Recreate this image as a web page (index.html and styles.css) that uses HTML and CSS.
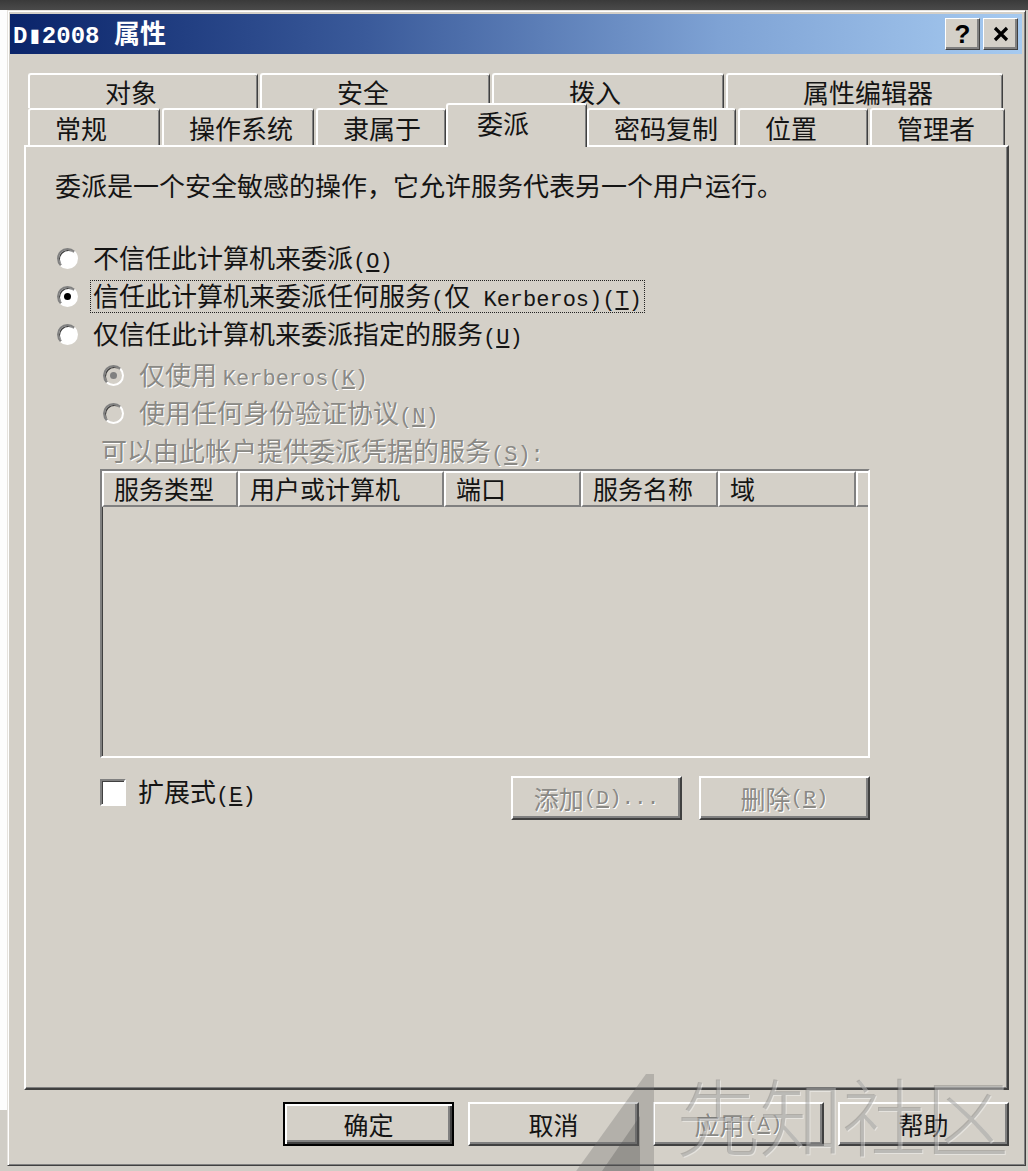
FILE: index.html
```html
<!DOCTYPE html>
<html lang="zh-CN">
<head>
<meta charset="utf-8">
<title>DM2008 属性</title>
<link rel="stylesheet" href="styles.css">
</head>
<body>
<div class="screen">
  <div class="topband"></div>
  <div class="main">
    <div class="leftstrip"></div>
    <div class="window">
      <div class="titlebar">
        <div class="title"><span class="tm">D▮2008 </span>属性</div>
        <div class="tbtns">
          <div class="tbtn q">?</div>
          <div class="tbtn">
            <svg width="16" height="16" viewBox="0 0 16 16"><path d="M2 2 L14 14 M14 2 L2 14" stroke="#000" stroke-width="3.2"/></svg>
          </div>
        </div>
      </div>
      <div class="body">
        <div class="tabs">
          <div class="tabrow r1">
            <div class="tab a1">对象</div>
            <div class="tab a2">安全</div>
            <div class="tab a3">拨入</div>
            <div class="tab a4">属性编辑器</div>
          </div>
          <div class="tabrow r2">
            <div class="tab b1">常规</div>
            <div class="tab b2">操作系统</div>
            <div class="tab b3">隶属于</div>
            <div class="tab b4 sel">委派</div>
            <div class="tab b5">密码复制</div>
            <div class="tab b6">位置</div>
            <div class="tab b7">管理者</div>
          </div>
        </div>
        <div class="panel">
          <div class="intro">委派是一个安全敏感的操作，它允许服务代表另一个用户运行。</div>
          <div class="opt"><span class="radio"></span><span class="lbl">不信任此计算机来委派<span class="m">(<u>O</u>)</span></span></div>
          <div class="opt"><span class="radio on"></span><span class="lbl focus">信任此计算机来委派任何服务<span class="m">(</span>仅<span class="m"> Kerberos)(<u>T</u>)</span></span></div>
          <div class="opt"><span class="radio"></span><span class="lbl">仅信任此计算机来委派指定的服务<span class="m">(<u>U</u>)</span></span></div>
          <div class="sub">
            <div class="opt dis"><span class="radio on"></span><span class="lbl">仅使用 <span class="m">Kerberos(<u>K</u>)</span></span></div>
            <div class="opt dis"><span class="radio"></span><span class="lbl">使用任何身份验证协议<span class="m">(<u>N</u>)</span></span></div>
          </div>
          <div class="svclabel dis">可以由此帐户提供委派凭据的服务<span class="m">(<u>S</u>):</span></div>
          <div class="list">
            <div class="lhead">
              <div class="hc c1">服务类型</div>
              <div class="hc c2">用户或计算机</div>
              <div class="hc c3">端口</div>
              <div class="hc c4">服务名称</div>
              <div class="hc c5">域</div>
              <div class="hc fill"></div>
            </div>
          </div>
          <div class="checkrow">
            <div class="chk"><span class="box"></span><span class="lbl">扩展式<span class="m">(<u>E</u>)</span></span></div>
            <div class="lbtns">
              <div class="btn dis">添加<span class="m">(<u>D</u>)...</span></div>
              <div class="btn dis">删除<span class="m">(<u>R</u>)</span></div>
            </div>
          </div>
        </div>
        <div class="btnrow">
          <div class="btn def">确定</div>
          <div class="btn">取消</div>
          <div class="btn dis">应用<span class="m">(<u>A</u>)</span></div>
          <div class="btn">帮助</div>
        </div>
      </div>
    </div>
  </div>
  <div class="watermark">
    <svg class="logo" width="90" height="110" viewBox="0 0 90 110">
      <polygon points="4,106 76,6 84,6 84,106" fill="rgba(110,110,110,0.32)"/>
      <polygon points="30,106 70,48 70,106" fill="rgba(80,80,80,0.30)"/>
    </svg>
    <span class="wmtext">先知社区</span>
  </div>
</div>
</body>
</html>
```

FILE: styles.css
```css
html, body {
  margin: 0;
  padding: 0;
}
body {
  background: #d0cdc6;
  width: 1028px;
  height: 1171px;
  overflow: hidden;
  font-family: "Noto Sans CJK SC", sans-serif;
  font-size: 26px;
  color: #141414;
}
.screen {
  position: relative;
  width: 1028px;
  height: 1171px;
}
.topband {
  height: 10px;
  background: linear-gradient(#3a3a3a, #4a4a4a);
}
.main {
  display: flex;
}
.leftstrip {
  width: 7px;
  height: 1100px;
  background: #fdfdfd;
}
.window {
  background: #d4d0c8;
  border: 1px solid;
  border-color: #e6e3de #404040 #404040 #e6e3de;
  box-shadow: inset 1px 1px #fff, inset -1px -1px #808080;
  padding: 3px 3px 0 2px;
  box-sizing: border-box;
  width: 1019px;
  height: 1156px;
}
.titlebar {
  height: 40px;
  background: linear-gradient(to right, #0a246a, #3a5a9a 35%, #7ea2d4 70%, #a6caf0);
  display: flex;
  align-items: center;
  justify-content: space-between;
  padding: 0 4px 0 3px;
}
.title {
  color: #fff;
  font-weight: bold;
  font-size: 26px;
  line-height: 40px;
}
.tm {
  font-family: "Liberation Mono", monospace;
  font-size: 24px;
  font-weight: bold;
}
.tbtns {
  display: flex;
  gap: 3px;
}
.tbtn {
  width: 35px;
  height: 32px;
  box-sizing: border-box;
  background: #d4d0c8;
  border: 1px solid;
  border-color: #fff #404040 #404040 #fff;
  box-shadow: inset -2px -2px #808080;
  display: flex;
  align-items: center;
  justify-content: center;
}
.tbtn.q {
  font-family: "Liberation Sans", sans-serif;
  font-weight: bold;
  font-size: 26px;
  color: #000;
  line-height: 30px;
}
.body {
  padding: 19px 13px 0 14px;
}
.tabs {
  margin-left: 4px;
}
.tabrow {
  display: flex;
  gap: 2px;
  align-items: flex-end;
}
.tab {
  box-sizing: border-box;
  background: #d4d0c8;
  border-top: 2px solid #fff;
  border-left: 2px solid #fff;
  border-right: 1px solid #404040;
  box-shadow: inset -1px 0 #808080;
  border-radius: 3px 3px 0 0;
  white-space: nowrap;
}
.r1 .tab {
  height: 35px;
  line-height: 33px;
  padding-left: 75px;
}
.r2 .tab {
  height: 37px;
  line-height: 36px;
  padding-left: 25px;
}
.a1 { width: 230px; }
.a2 { width: 230px; }
.a3 { width: 232px; }
.a4 { width: 277px; }
.b1 { width: 132px; }
.b2 { width: 152px; }
.b3 { width: 130px; }
.b4 { width: 137px; }
.b5 { width: 149px; }
.b6 { width: 130px; }
.b7 { width: 135px; }
.r2 .tab.sel {
  width: 141px;
  height: 44px;
  margin: -5px -2px -2px -2px;
  line-height: 36px;
  padding-left: 29px;
  position: relative;
  z-index: 2;
}
.panel {
  box-sizing: border-box;
  height: 945px;
  border-top: 2px solid #fff;
  border-left: 2px solid #fff;
  border-right: 2px solid #404040;
  border-bottom: 2px solid #404040;
  box-shadow: inset -1px -1px #808080;
  padding: 23px 0 0 29px;
}
.intro {
  height: 30px;
  line-height: 30px;
  margin-bottom: 39px;
}
.m {
  font-family: "Liberation Mono", monospace;
  font-size: 22px;
  line-height: 1;
}
.opt {
  height: 38px;
  display: flex;
  align-items: center;
}
.radio {
  flex: none;
  width: 21px;
  height: 21px;
  box-sizing: border-box;
  border-radius: 50%;
  background: #fff;
  border: 2px solid;
  border-color: #808080 #fff #fff #808080;
  box-shadow: inset 1px 1px #404040;
  margin-left: 2px;
  margin-right: 15px;
  display: flex;
  align-items: center;
  justify-content: center;
}
.radio.on::after {
  content: "";
  width: 7px;
  height: 7px;
  border-radius: 50%;
  background: #000;
}
.lbl {
  line-height: 28px;
  white-space: nowrap;
}
.lbl.focus {
  border: 1px dotted #222;
  margin-left: -3px;
  padding: 0 2px 0 2px;
}
.sub {
  margin-left: 46px;
  margin-top: 3px;
}
.dis {
  color: #8a8985;
  text-shadow: 1px 1px #fff;
}
.opt.dis .radio {
  background: #d4d0c8;
}
.opt.dis .radio.on::after {
  background: #808080;
}
.svclabel {
  margin-left: 46px;
  margin-top: 3px;
  height: 30px;
  line-height: 30px;
  white-space: nowrap;
}
.list {
  margin-left: 45px;
  margin-top: 4px;
  width: 770px;
  height: 289px;
  box-sizing: border-box;
  border: 2px solid;
  border-color: #808080 #fff #fff #808080;
  box-shadow: inset 1px 1px #404040;
  background: #d4d0c8;
}
.lhead {
  display: flex;
  height: 36px;
}
.hc {
  box-sizing: border-box;
  height: 36px;
  border-top: 2px solid #fff;
  border-left: 2px solid #fff;
  border-right: 2px solid #808080;
  border-bottom: 2px solid #808080;
  padding-left: 10px;
  line-height: 31px;
  font-size: 25px;
  white-space: nowrap;
}
.c1 { width: 136px; }
.c2 { width: 206px; }
.c3 { width: 137px; }
.c4 { width: 137px; }
.c5 { width: 138px; }
.hc.fill {
  flex: 1;
  border-right: none;
}
.checkrow {
  margin-left: 45px;
  margin-top: 18px;
  width: 770px;
  display: flex;
  justify-content: space-between;
  align-items: flex-start;
}
.chk {
  display: flex;
  align-items: center;
  margin-top: 1px;
  height: 30px;
}
.box {
  width: 26px;
  height: 27px;
  box-sizing: border-box;
  background: #fff;
  border: 2px solid;
  border-color: #808080 #fff #fff #808080;
  box-shadow: inset 1px 1px #404040;
  margin-right: 12px;
}
.lbtns {
  display: flex;
  gap: 17px;
}
.btn {
  width: 171px;
  height: 44px;
  box-sizing: border-box;
  background: #d4d0c8;
  border: 2px solid;
  border-color: #fff #404040 #404040 #fff;
  box-shadow: inset -2px -2px #808080;
  display: flex;
  align-items: center;
  justify-content: center;
  white-space: nowrap;
  font-size: 25px;
}
.btn .m {
  font-size: 21px;
}
.btn.def {
  border: 2px solid #000;
  box-shadow: inset 2px 2px #fff, inset -2px -2px #404040, inset -4px -4px #808080;
}
.btnrow {
  margin-top: 12px;
  display: flex;
  justify-content: flex-end;
  gap: 14px;
}
.watermark {
  position: absolute;
  left: 570px;
  top: 1064px;
  display: flex;
  align-items: flex-start;
  pointer-events: none;
}
.logo {
  margin-top: 4px;
}
.wmtext {
  font-family: "Noto Sans CJK SC", sans-serif;
  font-weight: 300;
  font-size: 84px;
  line-height: 1;
  margin-left: 16px;
  margin-top: 8px;
  letter-spacing: -1px;
  color: rgba(100, 100, 100, 0.32);
  text-shadow: 1px 1px rgba(255, 255, 255, 0.4);
}
```
